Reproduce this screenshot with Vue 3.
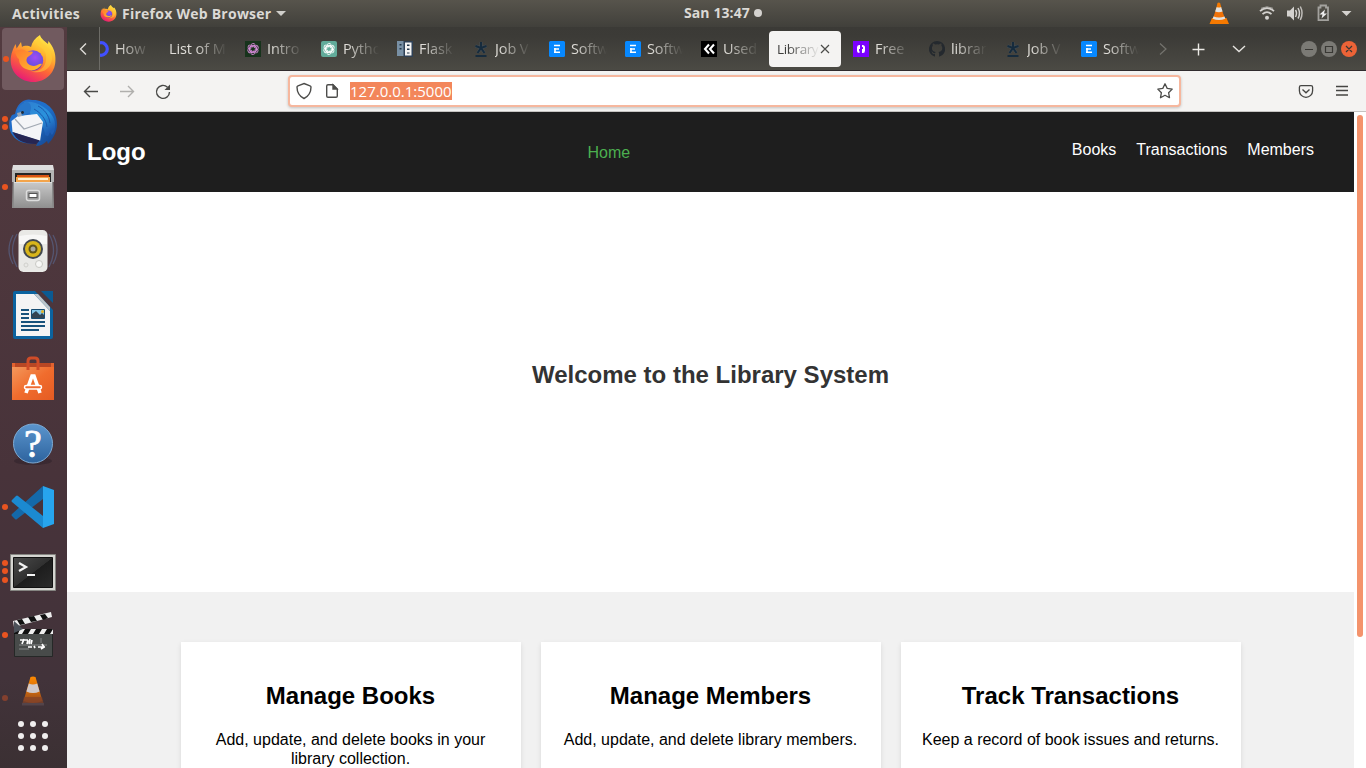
<script setup>
const tabs = [
  { icon: 'ring', label: 'How' },
  { icon: '', label: 'List of M' },
  { icon: 'gpt', label: 'Intro', bg: '#17331c', fg: '#d58ad8' },
  { icon: 'gpt', label: 'Pytho', bg: '#61ab9a', fg: '#ffffff', round: 2 },
  { icon: 'flask', label: 'Flask' },
  { icon: 'star', label: 'Job V' },
  { icon: 'e', label: 'Softw' },
  { icon: 'e', label: 'Softw' },
  { icon: 'used', label: 'Used' },
  { icon: '', label: 'Library', active: true },
  { icon: 'free', label: 'Free' },
  { icon: 'github', label: 'librar' },
  { icon: 'star', label: 'Job V' },
  { icon: 'e', label: 'Softw' },
]
const petals = [0, 60, 120, 180, 240, 300]
const cards = [
  { title: 'Manage Books', text: 'Add, update, and delete books in your library collection.' },
  { title: 'Manage Members', text: 'Add, update, and delete library members.' },
  { title: 'Track Transactions', text: 'Keep a record of book issues and returns.' },
]
</script>

<template>
  <div class="desktop">
    <svg class="defs" width="0" height="0">
      <defs>
        <linearGradient id="fxBody" x1=".8" y1="0" x2=".3" y2="1">
          <stop offset="0" stop-color="#fff44f" /><stop offset=".35" stop-color="#ffb52e" />
          <stop offset=".62" stop-color="#ff6a34" /><stop offset="1" stop-color="#e6177a" />
        </linearGradient>
        <linearGradient id="fxHead" x1="0" y1="0" x2="1" y2="1">
          <stop offset="0" stop-color="#ff7a2f" /><stop offset="1" stop-color="#ffbd2c" />
        </linearGradient>
        <radialGradient id="fxGlobe" cx=".6" cy=".35" r=".7">
          <stop offset="0" stop-color="#a04bf5" /><stop offset=".6" stop-color="#6a4fe0" /><stop offset="1" stop-color="#5a3296" />
        </radialGradient>
        <linearGradient id="metal" x1="0" y1="0" x2="0" y2="1">
          <stop offset="0" stop-color="#c9c9c9" /><stop offset="1" stop-color="#8f8f8f" />
        </linearGradient>
        <linearGradient id="tbird" x1="0" y1="0" x2="1" y2="1">
          <stop offset="0" stop-color="#2569c7" /><stop offset=".5" stop-color="#1e70ca" /><stop offset="1" stop-color="#143f87" />
        </linearGradient>
        <linearGradient id="wing" x1="0" y1="0" x2=".6" y2="1">
          <stop offset="0" stop-color="#2f7ed0" /><stop offset=".6" stop-color="#2a93dc" /><stop offset="1" stop-color="#1d5db4" />
        </linearGradient>
        <linearGradient id="bag" x1="0" y1="0" x2="1" y2="1">
          <stop offset="0" stop-color="#f3985c" /><stop offset=".5" stop-color="#f06c2d" /><stop offset="1" stop-color="#e55b23" />
        </linearGradient>
        <linearGradient id="help" x1="0" y1="0" x2="0" y2="1">
          <stop offset="0" stop-color="#5b95cd" /><stop offset="1" stop-color="#2d639e" />
        </linearGradient>
        <linearGradient id="term" x1="0" y1="0" x2="1" y2="1">
          <stop offset="0" stop-color="#4a4a4a" /><stop offset=".5" stop-color="#303030" /><stop offset=".51" stop-color="#1d1d1d" /><stop offset="1" stop-color="#2b2b2b" />
        </linearGradient>
        <linearGradient id="fadeCone" x1="0" y1="0" x2="0" y2="1">
          <stop offset="0" stop-color="#ff8a00" /><stop offset=".6" stop-color="#c8660f" /><stop offset="1" stop-color="#854326" />
        </linearGradient>
        <symbol id="firefox" viewBox="0 0 48 48">
          <path d="M31 0c1 4 5 6 8 9l.4-3c5 6 7.500 12 7 20C46 38 36.500 47 24.500 47 12 47 2 38 1.700 26 1.500 19 4.500 13 6.600 9l1 4.500L12 7l1 5c3-2 7-1 9 0 1-5 4-9 9-12z" fill="url(#fxBody)" />
          <circle cx="24" cy="25.500" r="10.200" fill="url(#fxGlobe)" />
          <path d="M6 17c4-3 8-3 11-1 3 1 6 0 7 1-1 3-5 4-6 6-2 4 2 8 7 8 4 0 5-3 8-2-4 6-10 8-16 5-5-2-7-6-7-10-2-1-3-4-4-7z" fill="url(#fxHead)" />
          <path d="M29 11c6 2 9 7 8 14-1 9-9 13-17 11 13 4 22-2 23-12 0-6-3-11-8-14-3-2-5-5-5-9-3 3-3 7-1 10z" fill="#ffce36" opacity=".55" />
        </symbol>
        <symbol id="gpt" viewBox="0 0 16 16">
          <g fill="none" stroke="currentColor" stroke-width="1.150">
            <path v-for="a in petals" :key="a" :transform="`rotate(${a} 8 8)`" d="M5.200 8.500V4.200a3 3 0 0 1 5.500-1.600M5.200 4.800 8 3.200l3.300 1.900" />
          </g>
        </symbol>
      </defs>
    </svg>

    <header class="topbar">
      <span class="activities">Activities</span>
      <svg class="mini-fox" width="17" height="17"><use href="#firefox" /></svg>
      <span class="appname">Firefox Web Browser</span>
      <svg class="caret" width="10" height="6"><path d="M0 0h10L5 5z" fill="#d0cfcb" /></svg>
      <span class="clock">San 13:47</span><i class="clock-dot"></i>
      <svg class="tray" width="166" height="27" viewBox="1200 0 166 27">
        <path d="M1212 18h14.500l2.500 6h-19.500z" fill="#f57900" /><path d="M1216.500 8l-3.800 11q6 3 12.600 0L1221 8z" fill="#ef7209" />
        <path d="M1217.500 3q1.300-1 2.600 0l1.400 5q-2.600 1-5.200 0z" fill="#f57900" />
        <path d="M1216.700 7q2.200 1 4.400 0l1.500 4.500q-3.700 1.500-7.500 0zM1213.500 16.500q5.500 2 11 0l.8 2.300q-6.300 2.500-12.600 0z" fill="#e3e2df" />
        <g fill="none" stroke="#d4d2cf" stroke-width="1.800"><path d="M1260 11.200q7-6.400 14 0M1262.500 14.100q4.500-4 9 0" /></g><circle cx="1267" cy="17.800" r="2" fill="#d4d2cf" />
        <path d="M1261 8.300q6-3 12 0" stroke="#aaa8a4" fill="none" />
        <path d="M1287 10.500h3l4-4v14l-4-4h-3z" fill="#d4d2cf" />
        <g fill="none" stroke="#d4d2cf" stroke-width="1.500"><path d="M1295.500 10q2 3 0 7M1298 8q3 5.500 0 10.500" /><path d="M1300.300 6.500q3.500 6.500 0 13.500" stroke="#c0beba" /></g>
        <path d="M1320.500 7.500h-2v12.700h9.500V7.500h-2v-2h-5.500z" fill="none" stroke="#a3a29e" stroke-width="1.800" />
        <path d="M1325 9.500l-5.500 5h3l-1 4 5.500-5h-3z" fill="#eee" />
        <path d="M1341.500 11h10l-5 5z" fill="#d4d2cf" />
      </svg>
    </header>

    <div class="workspace">
      <aside class="dock">
        <div class="cell focused">
          <span class="dots"><i></i></span>
          <svg width="48" height="48"><use href="#firefox" /></svg>
        </div>
        <div class="cell">
          <span class="dots"><i></i><i></i></span>
          <svg width="48" height="48" viewBox="0 0 48 48">
            <path d="M7 11C10 3 17-1 23 1c11-1 25 8 25 24 0 8-4 15-9 20l-1-3c-3 3-7 5-11 5l2-4C18 47 7 43 2 34-1 27 0 20 3 16l3-1z" fill="url(#tbird)" />
            <path d="M15 3c12-2 24 6 29 15 3 6 3 13-1 18l-2-3-2 4-3-1C36 24 24 22 20 12z" fill="url(#wing)" />
            <path d="M29 7c6 3 11 9 12 17M25 10c7 4 12 10 13 18" stroke="#1a56ad" fill="none" />
            <path d="M2.500 22L9 17l19-2 6 8-3 19L3.500 33z" fill="#f4f5f7" /><path d="M6 20l9 10 18-6" stroke="#a3aab4" stroke-width="1.300" fill="none" />
            <path d="M3.500 33l27.500 8.500-4 3.500C14 45 7 41 3.500 33z" fill="#262653" />
            <path d="M7 17c1-7 4-13 11-14 4 1 5 6 3 10l-5 3-6 1z" fill="#2876c9" /><path d="M8 14l4-1 1 4-4 1z" fill="#9ba6b5" /><circle cx="13.500" cy="13.500" r="1.400" fill="#222b37" />
          </svg>
        </div>
        <div class="cell">
          <span class="dots"><i></i></span>
          <svg width="48" height="48" viewBox="0 0 48 48">
            <path d="M4 2h40l1 43H3z" fill="#8b8b8b" /><path d="M4 2h40l1 5H3z" fill="#dedede" /><path d="M3 7h42v12H3z" fill="#b4b4b4" />
            <path d="M6 10h36v9H6z" fill="#252525" /><path d="M8 12h32v8H8z" fill="#d95414" /><path d="M7 14h34v6H7z" fill="#f3a44b" /><path d="M9 15h30v2H9z" fill="#fff0cf" />
            <path d="M5 19h38v26H5z" fill="url(#metal)" /><path d="M5 19.500h38" stroke="#dedede" />
            <rect x="17.500" y="27.500" width="13" height="10" rx="2" fill="#989898" stroke="#ddd" stroke-width="1.500" /><rect x="20" y="30.500" width="8" height="4" fill="#fff" stroke="#555" />
          </svg>
        </div>
        <div class="cell">
          <span class="dots"></span>
          <svg width="48" height="48" viewBox="0 0 48 48">
            <g fill="none" stroke="#59658c" stroke-width="1.300" opacity=".65"><path d="M8 7Q-1 23 8 40M4 8Q-4 23 4 37M40 7q9 16 0 33M44 8q8 15 0 29" /></g>
            <rect x="9.500" y="3" width="29" height="42" rx="5" fill="#e9e9e6" /><path d="M10 9q14-3 28 0v8H10z" fill="#fafafa" opacity=".8" />
            <circle cx="24" cy="22" r="10" fill="#42484f" /><circle cx="24" cy="22" r="8" fill="#d8b51b" /><circle cx="24" cy="22" r="4.500" fill="#5f531b" /><circle cx="24" cy="22" r="2.500" fill="#aaa99d" />
            <circle cx="30" cy="37" r="3.500" fill="#f7f7f5" stroke="#c8c8c4" /><circle cx="17" cy="38" r="2" fill="none" stroke="#d0d0cc" />
          </svg>
        </div>
        <div class="cell">
          <span class="dots"></span>
          <svg width="48" height="48" viewBox="0 0 48 48">
            <path d="M6 0h20l18 19v27q0 2-2 2H6q-2 0-2-2V2q0-2 2-2z" fill="#0b639f" /><path d="M32 0h12v12z" fill="#0b5a92" />
            <path d="M7 3h18l16 17v25H7z" fill="#f4f4f4" /><path d="M25 3l16 17v-4L29 3z" fill="#bfc6ca" />
            <path d="M12 19h8M12 23h8M12 27h8M12 31h24M12 35h24M12 39h18" stroke="#17527b" stroke-width="2" />
            <path d="M22.500 18.500h13v9h-13z" fill="#82c7e9" stroke="#174d72" /><path d="M23 27v-4l4-3 4 4 2-2 2 2v3z" fill="#344552" /><circle cx="33.500" cy="20.500" r="1.500" fill="#e8b423" />
          </svg>
        </div>
        <div class="cell">
          <span class="dots"></span>
          <svg width="48" height="48" viewBox="0 0 48 48">
            <path d="M5 8h38l2 4H3z" fill="#b74724" /><path d="M3 12h42v33H3z" fill="url(#bag)" /><path d="M3 8h3v4H3zM42 8h3v4h-3z" fill="#e2622f" />
            <path d="M19 15V6q0-3 3-3h4q3 0 3 3v9" fill="none" stroke="#cf4c28" stroke-width="3" />
            <path d="M17 38l6-17h2l6 17" fill="none" stroke="#fff" stroke-width="3.600" /><rect x="15.500" y="30.500" width="17" height="3.500" rx="1.700" fill="#f06a31" stroke="#fff" stroke-width="1.500" />
          </svg>
        </div>
        <div class="cell">
          <span class="dots"></span>
          <svg width="48" height="48" viewBox="0 0 48 48">
            <ellipse cx="24" cy="42" rx="19" ry="4" fill="#1c151d" opacity=".3" /><circle cx="24" cy="24.500" r="19.500" fill="url(#help)" stroke="#7eabd4" />
            <text x="24" y="38" text-anchor="middle" class="question">?</text>
          </svg>
        </div>
        <div class="cell">
          <span class="dots"><i></i></span>
          <svg width="48" height="48" viewBox="0 0 48 48">
            <path d="M34 3v13L8 36q-1 1-2 0l-3-3q-1-1 0-2z" fill="#1469a9" /><path d="M3 17l4-4q1-1 2 0l25 20v12L3 19q-1-1 0-2z" fill="#1b8ad1" />
            <path d="M34 3l11 4v34l-11 4z" fill="#27a5ee" />
          </svg>
        </div>
        <div class="cell">
          <span class="dots"><i></i><i></i><i></i></span>
          <svg width="48" height="48" viewBox="0 0 48 48">
            <path d="M1.500 7.500h45v36h-45z" fill="#d5d5d1" stroke="#858581" /><path d="M4.500 10.500h39v30h-39z" fill="url(#term)" stroke="#111" />
            <path d="M10 16l7 4-7 4" fill="none" stroke="#f4f4f4" stroke-width="2.200" /><path d="M18 28h8" stroke="#f4f4f4" stroke-width="2" />
          </svg>
        </div>
        <div class="cell">
          <span class="dots"><i></i></span>
          <svg width="48" height="48" viewBox="0 0 48 48">
            <path d="M5.500 18.500h38v27h-38z" fill="#484b4a" stroke="#252827" /><path d="M5 18h39v5H5z" fill="#eee" />
            <path d="M5 18h6l-2 5H5zM16 18h6l-3 5h-6zM27 18h6l-3 5h-6zM38 18h6l-3 5h-6z" fill="#111" />
            <path d="M4 10L42 1l1 5L5 16z" fill="#eee" /><path d="M8 9l5-1 3 5-5 1zM19 6l6-1 3 5-6 1zM31 4l5-1 3 4-5 2z" fill="#111" /><path d="M5 10l9 8-9 4z" fill="#4c5159" />
            <path d="M10 34h28M10 38h10" stroke="#858988" /><path d="M11 29h8M15 28l-2 5M19 29l-1 4M21 28l-1 5M23 29l-1 4M19 36h4M25 35l1 2M29 36h7M33 33l2 3-3 2" fill="none" stroke="#fff" stroke-width="1.700" /><path d="M32 27v5" stroke="#858988" />
          </svg>
        </div>
        <div class="cell vlc">
          <span class="dots faint"><i></i></span>
          <svg width="48" height="36" viewBox="0 0 48 36">
            <path d="M21.500 5q2.500-1 5 0L33.500 29q-9.500 4-19 0z" fill="url(#fadeCone)" /><path d="M19.800 11.500q4.200 2 8.400 0l2.400 8q-6.600 3-13.200 0z" fill="#d0c9cb" /><path d="M15 25h18l1.500 6h-21z" fill="#854326" opacity=".7" /><path d="M13 31h22v2.500H13z" fill="#65555b" opacity=".5" />
          </svg>
        </div>
        <div class="apps"><i v-for="n in 9" :key="n"></i></div>
      </aside>

      <main class="browser">
        <div class="tabbar">
          <div class="scroll-left"><svg width="10" height="14"><path d="M8 1.500L2.500 7l5.500 5.500" fill="none" stroke="#dedcd8" stroke-width="1.400" /></svg></div>
          <div class="tabstrip">
            <div class="tabs">
              <div v-for="(t, i) in tabs" :key="i" class="tab" :class="{ active: t.active }">
                <svg v-if="t.icon" class="favicon" width="16" height="16" viewBox="0 0 16 16">
                  <circle v-if="t.icon === 'ring'" cx="8" cy="8" r="6.300" fill="none" stroke="#4150ff" stroke-width="3.200" />
                  <g v-else-if="t.icon === 'gpt'" :color="t.fg"><rect width="16" height="16" :rx="t.round || 0" :fill="t.bg" /><use href="#gpt" x="1.500" y="1.500" width="13" height="13" /></g>
                  <g v-else-if="t.icon === 'flask'"><path d="M0 0h7.500v15H0z" fill="#7890a5" /><path d="M6.500 0H16v16H6.500z" fill="#2f4156" /><path d="M8 1.500h6.500v13H8z" fill="#f4f4f4" /><path d="M2.500 3h2v1.500h-2zM2.500 7h2v1.500h-2zM10 3.500h2.500V5H10zM10 7.500h2.500V9H10zM10 11.500h2.500v1H10z" fill="#24384b" /></g>
                  <g v-else-if="t.icon === 'star'" stroke="#162b3d"><path d="M8 1v6M2.500 5L8 7l5.500-2M4.500 12L8 7l3.500 5" fill="none" stroke="#4b657b" stroke-width="3" opacity=".4" /><path d="M8 1v6M2.500 5L8 7l5.500-2M4.500 12L8 7l3.500 5" fill="none" stroke-width="2" /><path d="M2.500 15h11" stroke-width="2" /></g>
                  <g v-else-if="t.icon === 'e'"><rect width="16" height="16" rx="1.500" fill="#0788ff" /><path d="M5 4.500h6M5 8h5M5 11.200h6M6 7v5" stroke="#fff" stroke-width="1.600" fill="none" /></g>
                  <g v-else-if="t.icon === 'used'"><path d="M0 0h16v16H0z" fill="#000" /><path d="M8 3.500L4 8l4 4.500M13 3.500L9 8l4 4.500" fill="none" stroke="#fff" stroke-width="2.100" /></g>
                  <g v-else-if="t.icon === 'free'"><path d="M0 0h16v16H0z" fill="#7a00ff" /><path d="M7 5H6Q5 5 5 6.500v3Q5 11 6.500 11M9 5h.5Q11 5 11 6.500v3q0 1.500-1 1.500H9" fill="none" stroke="#fff" stroke-width="2" /><path d="M6.500 4v4M9.500 8v4" stroke="#fff" /></g>
                  <path v-else-if="t.icon === 'github'" d="M8 0a8 8 0 0 0-2.500 15.600c.5.100.5-.2.500-.6v-2c-2 .5-2.500-.5-2.800-1.200-.3-.7-.8-1-.8-1.300 1-.3 1.500.7 1.900 1.200.5.700 1.200.7 1.800.4.100-.5.300-.8.600-1-3-.4-3.800-2-3.800-4 0-1 .4-1.700.9-2.300-.3-1 0-2 .1-2.200 1 0 1.700.5 2.200.9a8 8 0 0 1 4 0c.5-.4 1.200-.9 2.200-.9.100.2.400 1.200.1 2.200.5.600.9 1.300.9 2.300 0 2-.8 3.600-3.800 4 .5.500.6 1 .6 1.800v2.100c0 .4 0 .7.500.6A8 8 0 0 0 8 0z" fill="#24292e" />
                </svg>
                <span class="label">{{ t.label }}</span>
                <svg v-if="t.active" class="close" width="10" height="10"><path d="M1 1l8 8M9 1L1 9" stroke="#4b4b49" stroke-width="1.200" /></svg>
              </div>
            </div>
          </div>
          <svg class="tab-controls" width="219" height="42" viewBox="1147 28 219 42">
            <path d="M1160 43.500l6 5.500-6 5.500" fill="none" stroke="#74736e" stroke-width="1.200" />
            <path d="M1192.500 49.500h12M1198.500 43.500v12" stroke="#eceae6" stroke-width="1.400" /><path d="M1233 46l6 5.500 6-5.500" fill="none" stroke="#e5e3df" stroke-width="1.400" />
            <circle cx="1309" cy="49" r="8" fill="#7b7a75" /><circle cx="1329" cy="49" r="8" fill="#7b7a75" /><circle cx="1349" cy="49" r="8" fill="#ec6337" />
            <path d="M1305 49.500h8M1325.500 46.500h7v6h-7zM1346 46l6 6M1352 46l-6 6" fill="none" stroke="#393834" stroke-width="1.200" />
          </svg>
        </div>

        <div class="toolbar">
          <svg class="nav-icons" width="120" height="40" viewBox="67 71 120 40" fill="none" stroke-width="1.400">
            <path d="M98 91.500H85M90 86l-5.500 5.500L90 97" stroke="#494947" /><path d="M120 91.500h13M128 86l5.500 5.500L128 97" stroke="#b0afad" />
            <path d="M167.500 87.200a6.500 6.500 0 1 0 2 4.800" stroke="#494947" /><path d="M170 84.500v5.500h-5.500z" fill="#494947" />
          </svg>
          <div class="urlbar">
            <svg width="58" height="28" viewBox="290 77 58 28" fill="none" stroke="#4d4d4b" stroke-width="1.400">
              <path d="M304 83.500l6 2.300c1 .4 1 .7 1 1.200 0 5.500-3 9.500-7 11.500-4-2-7-6-7-11.500 0-.5 0-.8 1-1.200z" /><path d="M328 84.700h5l4.300 4.300v7q0 1.300-1.300 1.300h-8q-1.300 0-1.300-1.300V86q0-1.300 1.300-1.300z" /><path d="M333 85v4h4z" fill="#4d4d4b" />
            </svg>
            <span class="url">127.0.0.1:5000</span>
            <svg class="bookmark" width="18" height="18"><path d="M9 1.800l2.200 4.600 5 .7-3.600 3.600.9 5L9 13.300l-4.500 2.400.9-5-3.600-3.600 5-.7z" fill="none" stroke="#4b4b49" stroke-width="1.300" stroke-linejoin="round" /></svg>
          </div>
          <svg class="menu-icons" width="66" height="40" viewBox="1300 71 66 40" fill="none" stroke="#454543" stroke-width="1.300">
            <path d="M1301 85.600h10q1.600 0 1.600 1.600v3.500a6.500 6.500 0 0 1-13.200 0v-3.500q0-1.600 1.600-1.600zM1302.500 89.500l3.500 3.300 3.500-3.300" /><path d="M1336 86.500h12M1336 90.500h12M1336 95h12" />
          </svg>
        </div>

        <div class="viewport">
          <div class="page">
            <nav class="site-nav">
              <strong class="logo">Logo</strong>
              <a class="home">Home</a>
              <div class="links"><a>Books</a><a>Transactions</a><a>Members</a></div>
            </nav>
            <section class="hero"><h1>Welcome to the Library System</h1></section>
            <section class="features">
              <article v-for="c in cards" :key="c.title" class="card"><h2>{{ c.title }}</h2><p>{{ c.text }}</p></article>
            </section>
          </div>
          <div class="scrollbar"><i></i></div>
        </div>
      </main>
    </div>
  </div>
</template>

<style>
html, body { margin: 0; overflow: hidden; }
</style>

<style scoped>
* { box-sizing: border-box; }
svg { display: block; flex: none; overflow: visible; }
.desktop { width: 1366px; height: 768px; overflow: hidden; display: flex; flex-direction: column; font-family: "Open Sans", "Noto Sans", sans-serif; background: #49343a; }
.defs { position: absolute; }
.topbar { height: 27px; flex: none; display: flex; align-items: center; background: linear-gradient(#57544c, #41403b); color: #dbd9d5; font-size: 14px; font-weight: 700; white-space: nowrap; }
.topbar span { line-height: 27px; }
.activities { margin-left: 12px; width: 88px; letter-spacing: .3px; }
.mini-fox { margin-bottom: 1px; }
.appname { margin-left: 5px; width: 154px; letter-spacing: .25px; }
.clock { margin-left: 398px; width: 70px; letter-spacing: .1px; line-height: 25px !important; padding-bottom: 2px; }
.clock-dot { width: 8px; height: 8px; border-radius: 50%; background: #d4d2cf; margin-bottom: 1px; }
.tray { margin-left: auto; }
.workspace { flex: 1; display: flex; min-height: 0; }
.dock { width: 67px; flex: none; background: linear-gradient(#533b40, #48333a 60%, #42333a 88%, #3b3033); }
.cell { height: 64px; width: 66px; display: flex; align-items: center; }
.dots { width: 9px; flex: none; display: flex; flex-direction: column; align-items: center; gap: 2.500px; padding-left: 1px; }
.dots i { width: 6px; height: 6px; flex: none; border-radius: 50%; background: #e95420; }
.dots.faint { opacity: .4; }
.cell.focused { margin: 1px 0 1px 2px; width: 62px; height: 62px; border-radius: 4px; background: #715a5f; }
.focused .dots { width: 7px; padding: 0; margin-left: 0; }
.vlc { height: 45px; }
.vlc .dots { padding-top: 16px; }
.apps { display: grid; grid-template-columns: repeat(3, 6px); gap: 6px; margin: 9px 0 0 18px; }
.apps i { width: 6px; height: 6px; border-radius: 50%; background: #f0eeee; }
.question { font: 400 40px "Liberation Serif", serif; fill: #fff; stroke: #fff; stroke-width: .8px; }
.browser { flex: 1; min-width: 0; display: flex; flex-direction: column; }
.tabbar { height: 44px; flex: none; display: flex; align-items: center; background: linear-gradient(#3b3a36, #3c3b37 22%, #4b4a44); border-bottom: 1px solid #302b2e; }
.scroll-left { width: 33px; height: 43px; flex: none; border-right: 1px solid #6d6c67; display: flex; align-items: center; padding-left: 11px; }
.tabstrip { width: 1047px; flex: none; overflow: hidden; }
.tabs { display: flex; margin-left: -17px; width: 1064px; }
.tab { width: 72px; height: 36px; flex: none; margin: 0 2px; padding: 0 8px; display: flex; align-items: center; border-radius: 4px; color: #dfddd8; font-size: 14.500px; overflow: hidden; }
.favicon { margin-right: 6px; }
.label { flex: 1; min-width: 0; white-space: nowrap; line-height: 24px; padding-top: 1px; letter-spacing: -.1px; margin-right: -4px; -webkit-mask-image: linear-gradient(90deg, #000 calc(100% - 34px), transparent calc(100% - 2px)); mask-image: linear-gradient(90deg, #000 calc(100% - 34px), transparent calc(100% - 2px)); }
.active { background: #f4f3f2; color: #3f3f3d; }
.active .label { flex: none; width: 45px; margin-right: -2px; font-size: 13.500px; letter-spacing: -.4px; }
.close { margin-right: 3px; }
.toolbar { height: 41px; flex: none; display: flex; align-items: center; background: #f4f3f2; border-bottom: 1px solid #c5c3c1; }
.nav-icons { margin-right: 101px; }
.urlbar { width: 893px; height: 32px; border: 2px solid #f6b79e; border-radius: 4px; background: #fff; display: flex; align-items: center; box-shadow: 0 1px 3px rgba(0, 0, 0, .2); }
.url { margin-left: 2px; height: 18px; line-height: 18px; background: #f3865b; color: #fff; font-size: 15px; width: 102px; white-space: nowrap; }
.bookmark { margin-left: auto; margin-right: 5px; }
.menu-icons { margin-left: auto; }
.viewport { flex: 1; min-height: 0; display: flex; background: #fff; }
.page { width: 1287px; overflow: hidden; font-family: "Liberation Sans", Arial, sans-serif; font-size: 16px; }
.site-nav { height: 80px; background: #1e1e1e; color: #fff; padding: 0 40px 0 20px; display: flex; align-items: center; }
.logo { font-size: 24px; width: 500.500px; }
.home { color: #4caf50; padding-top: 1px; }
.links { display: flex; gap: 20px; margin-left: auto; padding-bottom: 5px; }
.hero { height: 400px; background: #fff; display: flex; justify-content: center; align-items: center; padding-bottom: 35px; }
.hero h1 { margin: 0; font-size: 24px; color: #333; }
.features { height: 300px; background: #f1f1f1; display: flex; gap: 20px; padding: 50px 0 0 113.500px; }
.card { width: 340px; padding: 20px; background: #fff; text-align: center; box-shadow: 0 2px 5px rgba(0, 0, 0, .1); color: #000; }
.card h2 { font-size: 24px; margin: 20px 0 21px; line-height: 27px; }
.card p { margin: 0; line-height: 19px; }
.scrollbar { width: 12px; padding: 3px; background: #fff; }
.scrollbar i { display: block; width: 6px; height: 522px; border-radius: 3px; background: #f4936c; }
</style>
